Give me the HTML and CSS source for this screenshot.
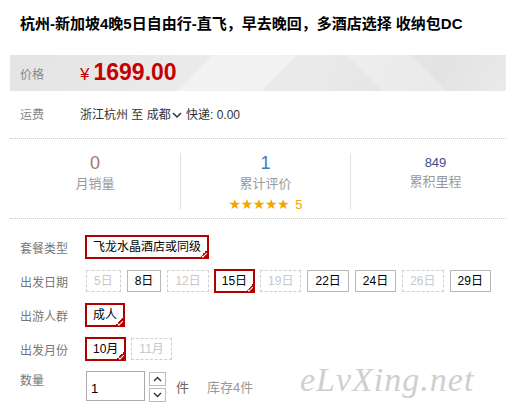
FILE: index.html
```html
<!DOCTYPE html>
<html lang="zh-CN">
<head>
<meta charset="utf-8">
<title>杭州-新加坡4晚5日自由行</title>
<link rel="stylesheet" href="styles.css">
</head>
<body>
<div class="page">
  <h1 class="title">杭州-新加坡4晚5日自由行-直飞，早去晚回，多酒店选择 收纳包DC</h1>

  <div class="price-band">
    <span class="label">价格</span>
    <span class="price"><span class="yen">¥</span>1699.00</span>
  </div>

  <div class="fee-row">
    <span class="label">运费</span>
    <span class="fee">浙江杭州 至 成都<svg class="chev" width="10" height="7" viewBox="0 0 10 7"><polyline points="1,1 5,5 9,1" fill="none" stroke="#333" stroke-width="1.5"/></svg> 快递: 0.00</span>
  </div>

  <div class="stats">
    <div class="stat">
      <div class="num num-sales">0</div>
      <div class="stat-label">月销量</div>
    </div>
    <div class="stat">
      <div class="num num-review">1</div>
      <div class="stat-label">累计评价</div>
      <div class="stars">★★★★★<span class="score">5</span></div>
    </div>
    <div class="stat">
      <div class="num num-miles">849</div>
      <div class="stat-label">累积里程</div>
    </div>
  </div>

  <div class="options">
    <div class="opt-row">
      <span class="label">套餐类型</span>
      <div class="choices">
        <span class="chip selected">飞龙水晶酒店或同级</span>
      </div>
    </div>
    <div class="opt-row">
      <span class="label">出发日期</span>
      <div class="choices">
        <span class="chip disabled">5日</span>
        <span class="chip">8日</span>
        <span class="chip disabled">12日</span>
        <span class="chip selected">15日</span>
        <span class="chip disabled">19日</span>
        <span class="chip">22日</span>
        <span class="chip">24日</span>
        <span class="chip disabled">26日</span>
        <span class="chip">29日</span>
      </div>
    </div>
    <div class="opt-row">
      <span class="label">出游人群</span>
      <div class="choices">
        <span class="chip selected">成人</span>
      </div>
    </div>
    <div class="opt-row">
      <span class="label">出发月份</span>
      <div class="choices">
        <span class="chip selected">10月</span>
        <span class="chip disabled">11月</span>
      </div>
    </div>
    <div class="qty-row">
      <span class="label">数量</span>
      <div class="qty-input">1</div>
      <div class="stepper">
        <span class="step"><svg width="9" height="6" viewBox="0 0 9 6"><polyline points="1,5 4.5,1.5 8,5" fill="none" stroke="#333" stroke-width="1.4"/></svg></span>
        <span class="step"><svg width="9" height="6" viewBox="0 0 9 6"><polyline points="1,1 4.5,4.5 8,1" fill="none" stroke="#333" stroke-width="1.4"/></svg></span>
      </div>
      <span class="unit">件</span>
      <span class="stock">库存4件</span>
    </div>
  </div>

  <div class="watermark">eLvXing.net</div>
</div>
</body>
</html>
```

FILE: styles.css
```css
html, body {
  margin: 0;
  padding: 0;
  background: #fff;
  overflow: hidden;
}

body {
  font-family: "Liberation Sans", "Noto Sans CJK SC", sans-serif;
  font-size: 12px;
  color: #333;
}

.page {
  position: relative;
  width: 506px;
  height: 414px;
  overflow: hidden;
}

.title {
  margin: 0;
  padding: 14px 0 0 20px;
  font-size: 15px;
  line-height: 20px;
  font-weight: bold;
  color: #000;
  white-space: nowrap;
}

.label {
  width: 60px;
  flex: none;
  color: #888;
  font-size: 12px;
}

.price-band {
  margin: 21px 0 0 10px;
  height: 36px;
  display: flex;
  align-items: center;
  padding-left: 10px;
  background-color: #e8e8e8;
  background-image:
    linear-gradient(45deg, transparent 70%, rgba(255,255,255,0.25) 70% 82%, transparent 82%),
    linear-gradient(135deg, transparent 38%, rgba(255,255,255,0.35) 38% 54%, transparent 54%),
    linear-gradient(120deg, #e4e4e4 0%, #ebebeb 40%, #eaeaea 60%, #e3e3e3 85%, #eaeaea 100%);
}

.price {
  color: #c40000;
  font-weight: bold;
  font-size: 23px;
  line-height: 28px;
  font-family: "Liberation Sans", Arial, sans-serif;
}

.yen {
  font-size: 17px;
  font-weight: normal;
  margin-right: 4px;
}

.fee-row {
  display: flex;
  align-items: center;
  margin: 14px 0 0 10px;
  padding: 0 0 13px 10px;
  line-height: 20px;
  border-bottom: 1px dotted #c8c8c8;
}

.fee {
  color: #333;
  display: inline-flex;
  align-items: center;
  white-space: pre;
}

.chev {
  margin: 0 1px;
}

.stats {
  margin-left: 10px;
  display: grid;
  grid-template-columns: 170px 170px 170px;
  border-bottom: 1px dotted #c8c8c8;
  padding: 14px 0 8px;
  width: 510px;
}

.stat {
  height: 57px;
  text-align: center;
}

.stat + .stat {
  border-left: 1px solid #e2e2e2;
}

.num {
  line-height: 20px;
  height: 20px;
  font-family: "Liberation Sans", Arial, sans-serif;
}

.num-sales {
  color: #a47a66;
  font-size: 18px;
}

.num-review {
  color: #3a7bbf;
  font-size: 18px;
}

.num-miles {
  color: #3d4c8c;
  font-size: 13px;
}

.stat-label {
  color: #999;
  font-size: 13px;
  line-height: 22px;
}

.num-miles + .stat-label {
  line-height: 18px;
}

.stars {
  color: #f5a500;
  font-family: "DejaVu Sans", sans-serif;
  font-size: 14px;
  line-height: 18px;
  letter-spacing: -0.4px;
}

.score {
  font-family: "Liberation Sans", Arial, sans-serif;
  font-size: 13px;
  letter-spacing: 0;
  margin-left: 6px;
}

.options {
  padding: 16px 0 0 20px;
}

.opt-row {
  display: flex;
  align-items: center;
  height: 24px;
  margin-bottom: 10px;
}

.opt-row .label {
  width: 66px;
  color: #777;
}

.choices {
  display: flex;
  align-items: center;
  gap: 6px;
}

.chip {
  position: relative;
  box-sizing: border-box;
  height: 22px;
  line-height: 20px;
  padding: 0 7px;
  border: 1px solid #b8b8b8;
  color: #000;
  white-space: nowrap;
  font-size: 12px;
}

.chip.disabled {
  border: 1px dashed #cfcfcf;
  color: #c8c8c8;
}

.chip.selected {
  height: 24px;
  line-height: 20px;
  border: 2px solid #b10000;
  padding: 0 6px;
  margin: 0 -1px;
}

.chip.selected::after {
  content: "";
  position: absolute;
  right: -2px;
  bottom: -2px;
  width: 11px;
  height: 11px;
  background: linear-gradient(135deg, transparent 50%, #b10000 50%);
}

.chip.selected::before {
  content: "";
  position: absolute;
  right: 0;
  bottom: 1px;
  width: 5px;
  height: 2px;
  border-left: 1px solid #fff;
  border-bottom: 1px solid #fff;
  transform: rotate(-45deg);
  z-index: 1;
}

.qty-row {
  display: flex;
  align-items: flex-start;
  margin-top: 1px;
}

.qty-row .label {
  width: 66px;
  line-height: 20px;
  color: #777;
}

.qty-input {
  box-sizing: border-box;
  width: 59px;
  height: 30px;
  border: 1px solid #aaa;
  padding: 8px 0 0 4px;
  line-height: 18px;
  color: #000;
  font-size: 13px;
}

.stepper {
  display: flex;
  flex-direction: column;
  gap: 2px;
  margin-left: 4px;
  padding-top: 1px;
}

.step {
  box-sizing: border-box;
  width: 17px;
  height: 14px;
  border: 1px solid #bbb;
  display: flex;
  align-items: center;
  justify-content: center;
  background: #fff;
}

.unit {
  margin-left: 10px;
  line-height: 30px;
  font-size: 13px;
  color: #666;
  padding-top: 2px;
}

.stock {
  margin-left: 18px;
  line-height: 30px;
  font-size: 13px;
  color: #999;
  padding-top: 2px;
}

.watermark {
  position: absolute;
  left: 300px;
  top: 360px;
  font-family: "Liberation Serif", "DejaVu Serif", serif;
  font-style: italic;
  font-size: 34px;
  color: #cfcfcf;
  letter-spacing: 1px;
  line-height: 40px;
  white-space: nowrap;
}
```
